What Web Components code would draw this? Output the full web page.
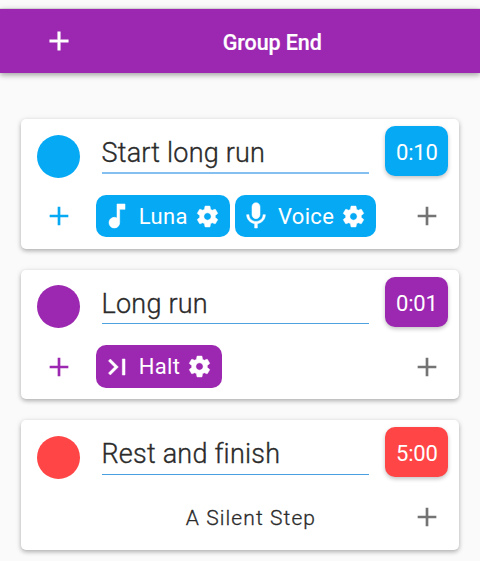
<!DOCTYPE html>
<html lang="en">
<head>
<meta charset="utf-8">
<title>Interval steps</title>
<style>
html, body { margin: 0; height: 561px; overflow: hidden; background: #fafafa; }
body { font-family: Roboto, "Noto Sans", sans-serif; color: #2b2b2b; }
</style>
</head>
<body>
<step-list>
  <group-bar slot="bar">Group End</group-bar>
  <step-card name="Start long run" time="0:10" style="--accent:#06a9f4;--line:#84bff2;--line-size:2px">
    <action-chip icon="note">Luna</action-chip>
    <action-chip icon="mic">Voice</action-chip>
  </step-card>
  <step-card name="Long run" time="0:01" style="--accent:#9c27b0;--line:#4da3dd">
    <action-chip icon="last">Halt</action-chip>
  </step-card>
  <step-card name="Rest and finish" time="5:00" silent style="--accent:#ff4545;--line:#4a9fe0">A Silent Step</step-card>
</step-list>
<script>
const PATHS = {
  plus: 'M19 13h-6v6h-2v-6H5v-2h6V5h2v6h6v2z',
  note: 'M12 3v10.55c-.59-.34-1.27-.55-2-.55-2.21 0-4 1.79-4 4s1.79 4 4 4 4-1.79 4-4V7h4V3h-6z',
  mic: 'M12 14c1.66 0 2.99-1.34 2.99-3L15 5c0-1.66-1.34-3-3-3S9 3.34 9 5v6c0 1.66 1.34 3 3 3zm5.3-3c0 3-2.54 5.1-5.3 5.1S6.7 14 6.7 11H5c0 3.41 2.72 6.23 6 6.72V21h2v-3.28c3.28-.48 6-3.3 6-6.72h-1.7z',
  last: 'M5.59 7.41L10.18 12l-4.59 4.59L7 18l6-6-6-6zM16 6h2v12h-2z',
  gear: 'M19.43 12.98c.04-.32.07-.64.07-.98s-.03-.66-.07-.98l2.11-1.65c.19-.15.24-.42.12-.64l-2-3.46c-.12-.22-.39-.3-.61-.22l-2.49 1c-.52-.4-1.08-.73-1.69-.98l-.38-2.65C14.46 2.18 14.25 2 14 2h-4c-.25 0-.46.18-.49.42l-.38 2.65c-.61.25-1.17.59-1.69.98l-2.49-1c-.23-.09-.49 0-.61.22l-2 3.46c-.13.22-.07.49.12.64l2.11 1.65c-.04.32-.07.65-.07.98s.03.66.07.98l-2.11 1.65c-.19.15-.24.42-.12.64l2 3.46c.12.22.39.3.61.22l2.49-1c.52.4 1.08.73 1.69.98l.38 2.65c.03.24.24.42.49.42h4c.25 0 .46-.18.49-.42l.38-2.65c.61-.25 1.17-.59 1.69-.98l2.49 1c.23.09.49 0 .61-.22l2-3.46c.12-.22.07-.49-.12-.64l-2.11-1.65zM12 15.5c-1.93 0-3.5-1.57-3.5-3.5s1.57-3.5 3.5-3.5 3.5 1.57 3.5 3.5-1.57 3.5-3.5 3.5z'
};

class MdIcon extends HTMLElement {
  connectedCallback() {
    if (this.shadowRoot) return;
    this.attachShadow({ mode: 'open' }).innerHTML = `
      <style>
        :host { display: block; flex: none; width: 32px; height: 32px; }
        svg { display: block; width: 100%; height: 100%; fill: currentColor; stroke: currentColor; stroke-width: var(--bold, 0); }
      </style>
      <svg viewBox="0 0 24 24"><path d="${PATHS[this.getAttribute('name')]}"/></svg>`;
  }
}
customElements.define('md-icon', MdIcon);

class GroupBar extends HTMLElement {
  connectedCallback() {
    if (this.shadowRoot) return;
    this.attachShadow({ mode: 'open' }).innerHTML = `
      <style>
        :host { display: grid; grid-template-columns: 64px 1fr; align-items: center; box-sizing: border-box;
          height: 64px; padding-left: 42.5px; background: #9c27b0; color: #fff;
          box-shadow: 0 2px 5px rgba(0,0,0,.28), 0 1px 8px rgba(0,0,0,.12), 0 -1px 0 rgba(0,0,0,.08); }
        .title { padding: 2px 42px 0 0; text-align: center; font-size: 21.5px; font-weight: 500; letter-spacing: -.1px; white-space: nowrap; -webkit-text-stroke: .2px; }
        md-icon { --bold: .3; }
      </style>
      <md-icon name="plus"></md-icon>
      <div class="title"><slot></slot></div>`;
  }
}
customElements.define('group-bar', GroupBar);

class ActionChip extends HTMLElement {
  connectedCallback() {
    if (this.shadowRoot) return;
    this.attachShadow({ mode: 'open' }).innerHTML = `
      <style>
        :host { display: flex; align-items: center; box-sizing: border-box; height: 42.5px;
          padding: 0 10px 0 5.2px; border-radius: 10px; background: var(--accent); color: #fff;
          font-size: 22px; letter-spacing: .35px; white-space: nowrap; }
        .label { margin: 0 7px 0 5.5px; }
        .gear { width: 25px; height: 25px; --bold: .5; }
      </style>
      <md-icon name="${this.getAttribute('icon')}" style="--bold:.4"></md-icon>
      <span class="label"><slot></slot></span>
      <md-icon class="gear" name="gear"></md-icon>`;
  }
}
customElements.define('action-chip', ActionChip);

class StepCard extends HTMLElement {
  connectedCallback() {
    if (this.shadowRoot) return;
    const silent = this.hasAttribute('silent');
    this.attachShadow({ mode: 'open' }).innerHTML = `
      <style>
        :host { display: grid; grid-template-columns: 64.5px 283.8px 63px; grid-template-rows: 50px 42.5px;
          row-gap: 18.7px; box-sizing: border-box; height: 129.5px; padding: 7.3px 0 0 16px;
          border-radius: 5px; background: #fff;
          box-shadow: 0 2px 4px rgba(0,0,0,.24), 0 1px 6px rgba(0,0,0,.1); }
        .dot { width: 43px; height: 43px; margin-top: 8.5px; border-radius: 50%; background: var(--accent); }
        .name { height: 47.5px; margin-right: 16px; box-sizing: border-box; border-bottom: var(--line-size, 1px) solid var(--line);
          font-size: 27px; font-weight: 300; line-height: 54px; letter-spacing: .22px; white-space: nowrap; -webkit-text-stroke: .35px; }
        .time { display: grid; place-items: center; border-radius: 10px; background: var(--accent); color: #fff;
          font-size: 22px; letter-spacing: -.2px; padding-top: 3px; box-sizing: border-box; height: 50px;
          box-shadow: 0 2px 4px rgba(0,0,0,.24); }
        .actions { grid-column: 1 / -1; display: flex; align-items: center; margin: 0 5.5px 0 5.5px; }
        .add { color: var(--accent); }
        .items { flex: 1; display: flex; gap: 5.5px; margin-left: 21.5px; }
        .more { color: #747474; }
        .silent { justify-content: center; font-size: 21px; font-weight: 300; letter-spacing: 1.1px; padding: 2px 5px 0 0; -webkit-text-stroke: .3px; }
      </style>
      <div class="dot"></div>
      <div class="name">${this.getAttribute('name')}</div>
      <div class="time">${this.getAttribute('time')}</div>
      <div class="actions">
        <md-icon class="add" name="plus" ${silent ? 'style="visibility:hidden"' : ''}></md-icon>
        <div class="items ${silent ? 'silent' : ''}"><slot></slot></div>
        <md-icon class="more" name="plus"></md-icon>
      </div>`;
  }
}
customElements.define('step-card', StepCard);

class StepList extends HTMLElement {
  connectedCallback() {
    if (this.shadowRoot) return;
    this.attachShadow({ mode: 'open' }).innerHTML = `
      <style>
        :host { display: block; padding-top: 9px; }
        .cards { display: flex; flex-direction: column; gap: 21px; padding: 46px 21px 0; }
      </style>
      <slot name="bar"></slot>
      <div class="cards"><slot></slot></div>`;
  }
}
customElements.define('step-list', StepList);
</script>
</body>
</html>
